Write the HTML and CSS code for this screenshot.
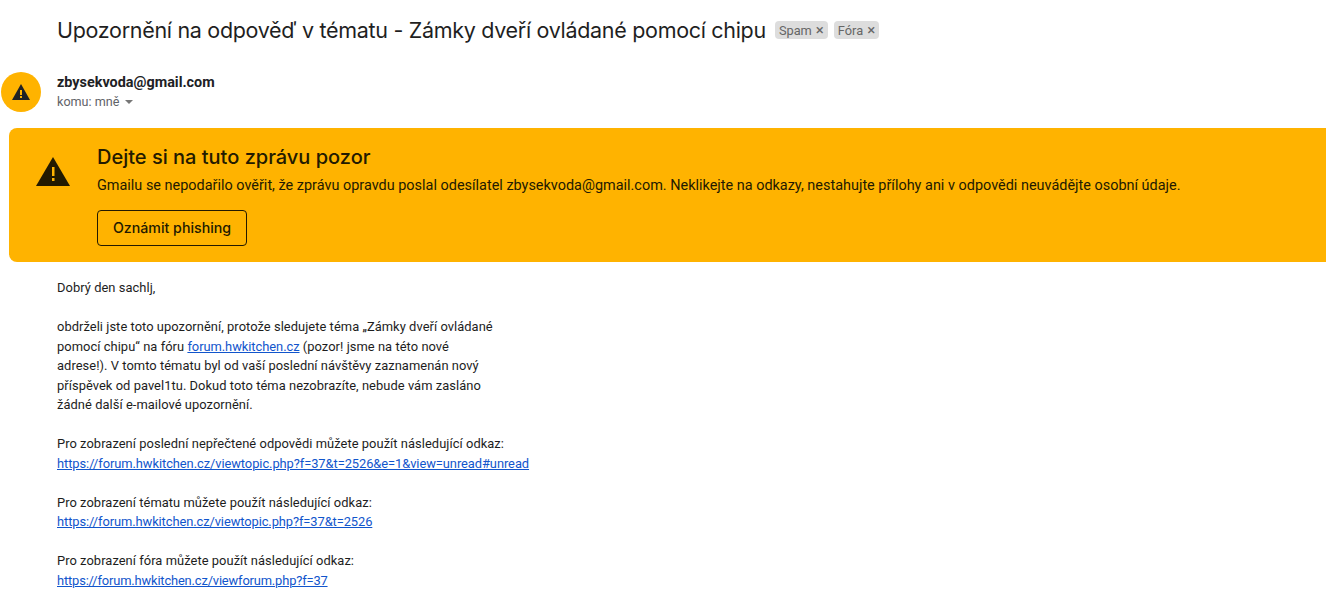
FILE: index.html
```html
<!DOCTYPE html>
<html lang="cs">
<head>
<meta charset="utf-8">
<title>Upozornění na odpověď v tématu</title>
<link rel="stylesheet" href="styles.css">
</head>
<body>
<div class="subject-row">
  <h1 class="subject">Upozornění na odpověď v tématu - Zámky dveří ovládané pomocí chipu</h1>
  <span class="label">Spam <span class="label-x">×</span></span>
  <span class="label">Fóra <span class="label-x">×</span></span>
</div>
<div class="sender-row">
  <div class="avatar">
    <svg class="avatar-icon" viewBox="0 0 18 16"><path d="M0 16 9 0l9 16z" fill="#202124"/><path d="M8 6h2v5H8zM8 12h2v2H8z" fill="#ffb300"/></svg>
  </div>
  <div class="sender-text">
    <div class="sender-name">zbysekvoda@gmail.com</div>
    <div class="recipient">komu: mně <span class="caret"></span></div>
  </div>
</div>
<section class="warning">
  <svg class="warning-icon" viewBox="0 0 34 29"><path d="M0 29 17 0l17 29z" fill="#231a00"/><path d="M16 10h2.500v9H16zM16 21h2.500v3H16z" fill="#ffb300"/></svg>
  <div class="warning-body">
    <h2 class="warning-title">Dejte si na tuto zprávu pozor</h2>
    <p class="warning-text">Gmailu se nepodařilo ověřit, že zprávu opravdu poslal odesílatel zbysekvoda@gmail.com. Neklikejte na odkazy, nestahujte přílohy ani v odpovědi neuvádějte osobní údaje.</p>
    <button class="report">Oznámit phishing</button>
  </div>
</section>
<main class="message">
  <p>Dobrý den sachlj,</p>
  <p>obdrželi jste toto upozornění, protože sledujete téma „Zámky dveří ovládané<br>pomocí chipu“ na fóru <a href="#" class="short-link">forum.hwkitchen.cz</a> (pozor! jsme na této nové<br>adrese!). V tomto tématu byl od vaší poslední návštěvy zaznamenán nový<br>příspěvek od pavel1tu. Dokud toto téma nezobrazíte, nebude vám zasláno<br>žádné další e-mailové upozornění.</p>
  <p>Pro zobrazení poslední nepřečtené odpovědi můžete použít následující odkaz:<br><a href="#" class="long-link">https://forum.hwkitchen.cz/viewtopic.php?f=37&amp;t=2526&amp;e=1&amp;view=unread#unread</a></p>
  <p>Pro zobrazení tématu můžete použít následující odkaz:<br><a href="#" class="mid-link">https://forum.hwkitchen.cz/viewtopic.php?f=37&amp;t=2526</a></p>
  <p>Pro zobrazení fóra můžete použít následující odkaz:<br><a href="#" class="forum-link">https://forum.hwkitchen.cz/viewforum.php?f=37</a></p>
</main>
</body>
</html>
```
FILE: styles.css
```css
html, body { margin: 0; height: 604px; overflow: hidden; background: #fff; }
body { font-family: Roboto, "Liberation Sans", sans-serif; color: #202124; }

.subject-row { display: flex; align-items: center; height: 28px; padding: 16px 0 0 57px; }
.subject { margin: 0 9px 0 0; font: 400 21.5px/28px Inter, sans-serif; letter-spacing: -0.31px; color: #1f1f1f; white-space: nowrap; }
.label { display: inline-flex; align-items: center; gap: 4px; height: 18px; margin-right: 6px; padding: 0 4px; border-radius: 4px; background: #dddddd; color: #666; font-size: 12.8px; }
.label-x { font-size: 15px; line-height: 14px; }

.sender-row { display: flex; gap: 16px; height: 48px; padding: 28px 0 0 1px; }
.avatar { width: 40px; height: 40px; border-radius: 50%; background: #ffb300; display: flex; align-items: center; justify-content: center; }
.avatar-icon { width: 18px; height: 16px; }
.sender-text { padding-top: 1px; }
.sender-name { font-size: 14.4px; font-weight: 700; line-height: 20px; }
.recipient { display: flex; align-items: center; gap: 6px; font-size: 12.6px; line-height: 18px; color: #5f6368; }
.caret { width: 0; height: 0; border: 4px solid transparent; border-top-color: #777; border-bottom: 0; }

.warning { display: flex; margin: 8px 0 0 9px; height: 134px; background: #ffb300; border-radius: 8px 0 0 8px; color: #231a00; }
.warning-icon { width: 34px; height: 29px; margin: 29px 0 0 27px; }
.warning-body { margin-left: 27px; padding-top: 17px; }
.warning-title { margin: 0; font: 500 20px/24px Inter, sans-serif; }
.warning-text { margin: 7px 0 0; font-size: 14.45px; line-height: 20px; white-space: nowrap; }
.report { display: block; margin-top: 14px; width: 150px; height: 36px; background: transparent; border: 1px solid #231a00; border-radius: 4px; font: 500 14.2px Inter, sans-serif; color: #231a00; padding: 0 0 2px; }

.message { padding: 16px 0 0 57px; font-size: 12.9px; line-height: 19.5px; letter-spacing: 0.05px; color: #1d1d1d; }
.message p { margin: 0 0 19.500px; }
.message a { color: #1155cc; }
.message .short-link { letter-spacing: -0.05px; }
.message .long-link { letter-spacing: -0.07px; }
.message .mid-link { letter-spacing: -0.09px; }
.message .forum-link { letter-spacing: -0.16px; }
```
